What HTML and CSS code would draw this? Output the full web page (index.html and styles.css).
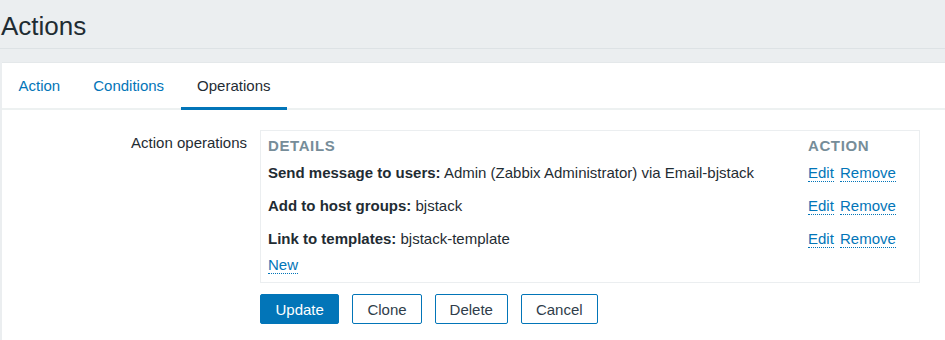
FILE: index.html
```html
<!DOCTYPE html>
<html lang="en">
<head>
  <meta charset="UTF-8">
  <title>Actions</title>
  <link rel="stylesheet" href="styles.css">
</head>
<body>
<div class="header">
  <h1 class="title">Actions</h1>
</div>

<div class="content">
  <!-- Tabs -->
  <div class="tabs">
    <a href="#" class="tab">Action</a>
    <a href="#" class="tab">Conditions</a>
    <a href="#" class="tab active">Operations</a>
  </div>

  <!-- Form -->
  <div class="form">
    <div class="form-row">
      <div class="form-label">Action operations</div>
      <div class="form-field">
        <div class="op-box">
          <table class="op-table">
            <tr>
              <th>Details</th>
              <th class="col-action">Action</th>
            </tr>
            <tr>
              <td><b>Send message to users:</b> Admin (Zabbix Administrator) via Email-bjstack</td>
              <td class="col-action"><a href="#" class="link">Edit</a> <a href="#" class="link">Remove</a></td>
            </tr>
            <tr>
              <td><b>Add to host groups:</b> bjstack</td>
              <td class="col-action"><a href="#" class="link">Edit</a> <a href="#" class="link">Remove</a></td>
            </tr>
            <tr>
              <td><b>Link to templates:</b> bjstack-template</td>
              <td class="col-action"><a href="#" class="link">Edit</a> <a href="#" class="link">Remove</a></td>
            </tr>
          </table>
          <div class="new-row"><a href="#" class="link">New</a></div>
        </div>
      </div>
    </div>

    <div class="buttons">
      <button class="btn btn-primary">Update</button>
      <button class="btn">Clone</button>
      <button class="btn">Delete</button>
      <button class="btn">Cancel</button>
    </div>
  </div>
</div>
</body>
</html>
```

FILE: styles.css
```css
body, html {
  margin: 0;
  padding: 0;
  font-family: "Liberation Sans", Arial, sans-serif;
  font-size: 15px;
  color: #1f2c33;
  background: #ebeef0;
}

.header {
  height: 48px;
  border-bottom: 1px solid #dde2e5;
  display: flex;
  align-items: center;
}

.title {
  margin: 4px 0 0 1px;
  font-size: 26px;
  font-weight: normal;
  color: #1f2c33;
}

.content {
  margin: 13px 0 0 2px;
  background: white;
  border-top: 1px solid #e4e8ea;
  height: 277px;
}

.tabs {
  display: flex;
  height: 45px;
  border-bottom: 2px solid #edf1f1;
}

.tab {
  display: flex;
  align-items: center;
  padding: 0 16.5px;
  color: #0275b8;
  text-decoration: none;
  margin-bottom: -2px;
  border-bottom: 3px solid transparent;
}

.tab.active {
  color: #1f2c33;
  border-bottom-color: #0275b8;
}

.form {
  padding-top: 20px;
}

.form-row {
  display: flex;
}

.form-label {
  width: 245px;
  text-align: right;
  padding-top: 3px;
  line-height: 20px;
}

.form-field {
  margin-left: 13px;
}

.op-box {
  width: 644px;
  border: 1px solid #ebeef0;
  padding: 4px 7px 7px 7px;
}

.op-table {
  width: 100%;
  border-collapse: collapse;
}

.op-table th {
  height: 21px;
  padding: 0;
  text-align: left;
  text-transform: uppercase;
  color: #768d99;
  letter-spacing: 0.6px;
  font-weight: bold;
}

.op-table td {
  height: 33px;
  padding: 0;
}

.col-action {
  width: 104px;
  white-space: nowrap;
}

.link {
  color: #0275b8;
  text-decoration: none;
  border-bottom: 1px dotted #0275b8;
  margin-right: 2px;
}

.new-row {
  line-height: 20px;
}

.buttons {
  display: flex;
  gap: 13px;
  margin: 11px 0 0 258px;
}

.btn {
  height: 30px;
  padding: 0 14px;
  font-family: "Liberation Sans", Arial, sans-serif;
  font-size: 15px;
  color: #2f3d4a;
  background: white;
  border: 1px solid #0275b8;
  border-radius: 2px;
  cursor: pointer;
}

.btn-primary {
  background: #0275b8;
  color: white;
  padding: 0 14.5px;
}
```
